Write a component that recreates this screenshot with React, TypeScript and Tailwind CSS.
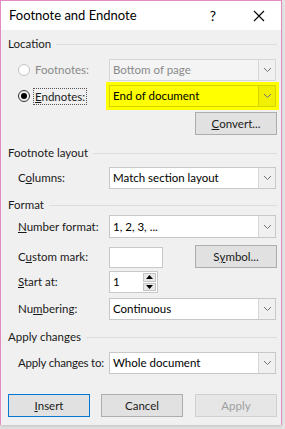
import React from 'react';

const font = { fontFamily: '"Segoe UI", Lato, "Noto Sans", sans-serif' };

const Chevron = () => (
  <svg width="9" height="6" viewBox="0 0 9 6">
    <path d="M1 1 L4.5 4.5 L8 1" fill="none" stroke="#707070" strokeWidth="1" />
  </svg>
);

const Dropdown = ({ value, disabled, highlight }: { value: string; disabled?: boolean; highlight?: boolean }) => (
  <div
    className={
      'flex h-full w-full items-stretch border ' +
      (highlight
        ? 'border-[#d4d400] bg-[#ffff00] shadow-[0_0_0_3px_#ffff00]'
        : disabled
        ? 'border-[#d6d6d6] bg-[#f4f4f4]'
        : 'border-[#c8c8c8] bg-white')
    }
  >
    <div className={'flex flex-1 items-center pl-[3px] whitespace-nowrap ' + (disabled ? 'text-[#8a8a8a]' : 'text-black')}>{value}</div>
    <div
      className={
        'flex w-[17px] items-center justify-center border-l ' +
        (highlight ? 'border-[#d4d400] bg-[#f0f000]' : 'border-[#d6d6d6] bg-[#f0f0f0]')
      }
    >
      <Chevron />
    </div>
  </div>
);

const Header = ({ title, mt }: { title: string; mt: string }) => (
  <div className={'flex h-[16px] items-center pl-[7px] pr-[4px] ' + mt}>
    <span className="whitespace-nowrap text-[#1a1a1a]">{title}</span>
    <div className="ml-[5px] h-px flex-1 bg-[#dcdcdc]" />
  </div>
);

const Row = ({ label, children, mt, h }: { label: React.ReactNode; children: React.ReactNode; mt: string; h: string }) => (
  <div className={'grid grid-cols-[91px_167px] pl-[17px] ' + mt + ' ' + h}>
    <div className="flex items-center whitespace-nowrap text-[#1a1a1a]">{label}</div>
    <div>{children}</div>
  </div>
);

const Btn = ({ children, primary, disabled }: { children: React.ReactNode; primary?: boolean; disabled?: boolean }) => (
  <div
    className={
      'flex h-[23px] w-[82px] items-center justify-center border whitespace-nowrap ' +
      (primary
        ? 'border-[#0078d7] bg-[#e1e1e1] text-[#1a1a1a]'
        : disabled
        ? 'border-[#d0d0d0] bg-[#e6e6e6] text-[#a0a0a0]'
        : 'border-[#adadad] bg-[#e1e1e1] text-[#1a1a1a]')
    }
  >
    {children}
  </div>
);

export default function App() {
  return (
    <div className="h-[429px] w-[285px] overflow-hidden bg-[#e6e6e6] text-[11.5px]" style={font}>
      <div className="flex h-[425px] w-[282px] flex-col border-l border-r border-t border-[#e38bc2] bg-[#f0f0f0] shadow-[0_2px_3px_rgba(0,0,0,0.12)]">
        {/* title bar */}
        <div className="flex h-[29px] items-center bg-white pl-[8px]">
          <span className="text-[13px] text-black">Footnote and Endnote</span>
          <span className="ml-auto mr-[37px] text-[14px] text-black">?</span>
          <svg width="12" height="12" viewBox="0 0 12 12" className="mr-[16px]">
            <path d="M1 1 L11 11 M11 1 L1 11" stroke="#000" strokeWidth="1.1" />
          </svg>
        </div>

        <Header title="Location" mt="mt-[6px]" />
        <div className="mt-[7px] grid h-[22px] grid-cols-[91px_167px] pl-[17px]">
          <div className="flex items-center whitespace-nowrap">
            <span className="mr-[5px] h-[12px] w-[12px] rounded-full border border-[#c4c4c4] bg-white" />
            <span className="text-[#8a8a8a]">Footnotes:</span>
          </div>
          <Dropdown value="Bottom of page" disabled />
        </div>
        <div className="mt-[4px] grid h-[22px] grid-cols-[91px_167px] pl-[17px]">
          <div className="flex items-center whitespace-nowrap">
            <span className="mr-[3px] flex h-[12px] w-[12px] items-center justify-center rounded-full border border-[#333]">
              <span className="h-[6px] w-[6px] rounded-full bg-black" />
            </span>
            <span className="border border-dotted border-[#555] px-[1px] leading-[15px] text-[#1a1a1a]">
              <u>E</u>ndnotes:
            </span>
          </div>
          <Dropdown value="End of document" highlight />
        </div>
        <div className="mt-[5px] flex justify-end pr-[4px]">
          <Btn>
            <u>C</u>onvert...
          </Btn>
        </div>

        <Header title="Footnote layout" mt="mt-[10px]" />
        <Row label={<span>C<u>o</u>lumns:</span>} mt="mt-[6px]" h="h-[22px]">
          <Dropdown value="Match section layout" />
        </Row>

        <Header title="Format" mt="mt-[8px]" />
        <Row label={<span><u>N</u>umber format:</span>} mt="mt-[2px]" h="h-[23px]">
          <Dropdown value="1, 2, 3, ..." />
        </Row>
        <div className="mt-[7px] flex h-[23px] pl-[17px] pr-[4px]">
          <div className="flex w-[91px] items-center whitespace-nowrap text-[#1a1a1a]">
            <span>C<u>u</u>stom mark:</span>
          </div>
          <div className="mt-[2px] h-[21px] w-[54px] border border-[#c8c8c8] bg-white" />
          <div className="ml-auto">
            <Btn>
              S<u>y</u>mbol...
            </Btn>
          </div>
        </div>
        <Row label={<span><u>S</u>tart at:</span>} mt="mt-[3px]" h="h-[22px]">
          <div className="flex h-full w-[49px] border border-[#c8c8c8] bg-white">
            <div className="flex flex-1 items-center pl-[3px] text-black">1</div>
            <div className="flex w-[15px] flex-col gap-px p-px">
              <div className="flex flex-1 items-center justify-center border border-[#c4c4c4] bg-[#e8e8e8]">
                <svg width="7" height="4" viewBox="0 0 7 4"><path d="M0 4 L3.5 0 L7 4 Z" fill="#000" /></svg>
              </div>
              <div className="flex flex-1 items-center justify-center border border-[#c4c4c4] bg-[#e8e8e8]">
                <svg width="7" height="4" viewBox="0 0 7 4"><path d="M0 0 L3.5 4 L7 0 Z" fill="#000" /></svg>
              </div>
            </div>
          </div>
        </Row>
        <Row label={<span>Nu<u>m</u>bering:</span>} mt="mt-[5px]" h="h-[22px]">
          <Dropdown value="Continuous" />
        </Row>

        <Header title="Apply changes" mt="mt-[9px]" />
        <Row label={<span className="tracking-[-0.2px]">Apply changes to:</span>} mt="mt-[7px]" h="h-[22px]">
          <Dropdown value="Whole document" />
        </Row>

        <div className="mt-[20px] flex pl-[7px] pr-[4px]">
          <Btn primary>
            <u>I</u>nsert
          </Btn>
          <div className="ml-[11px]">
            <Btn>Cancel</Btn>
          </div>
          <div className="ml-auto">
            <Btn disabled>Apply</Btn>
          </div>
        </div>
      </div>
    </div>
  );
}
